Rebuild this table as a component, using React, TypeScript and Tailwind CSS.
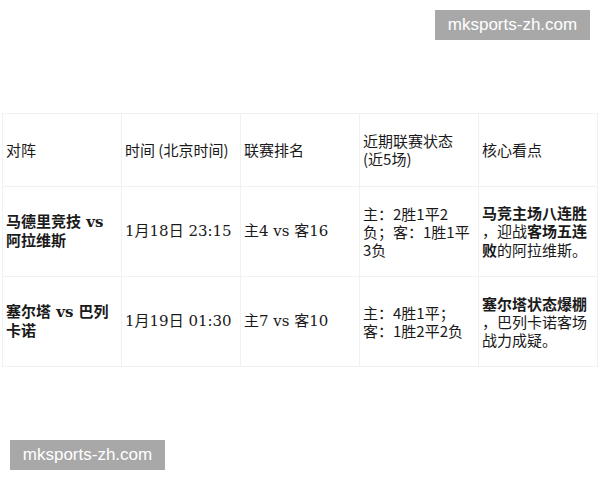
import React from "react";

const serif = "font-['DejaVu_Serif','Noto_Sans_CJK_SC',serif]";
const sans = "font-['Noto_Sans_CJK_SC',sans-serif]";

function Cell({ children, className = "" }: { children: React.ReactNode; className?: string }) {
  return (
    <div className={`flex items-center border-r border-b border-[#f1f1f1] pl-[3px] pr-[3px] text-[15px] text-[#1a1a1a] ${className}`}>
      <div>{children}</div>
    </div>
  );
}

export default function App() {
  return (
    <div className="relative w-[600px] h-[480px] bg-white overflow-hidden">
      <div className="absolute right-[10px] top-[10px] w-[155px] h-[30px] bg-[#a8a8a8] flex items-center justify-center text-white text-[17px] font-['Liberation_Sans',sans-serif]">
        mksports-zh.com
      </div>

      <div className="pt-[113px] pl-[2px]">
        <div className="grid grid-cols-[119px_119px_119px_119px_119px] border-t border-l border-[#f1f1f1] w-[596px]">
          <Cell className={`h-[73px] ${sans}`}>对阵</Cell>
          <Cell className={`h-[73px] ${sans}`}>时间 (北京时间)</Cell>
          <Cell className={`h-[73px] ${sans}`}>联赛排名</Cell>
          <Cell className={`h-[73px] ${sans} leading-[18px]`}>近期联赛状态<br />(近5场)</Cell>
          <Cell className={`h-[73px] ${sans}`}>核心看点</Cell>

          <Cell className={`h-[90px] ${serif} font-bold leading-[19px]`}>马德里竞技 vs<br />阿拉维斯</Cell>
          <Cell className={`h-[90px] ${serif}`}>1月18日 23:15</Cell>
          <Cell className={`h-[90px] ${serif}`}>主4 vs 客16</Cell>
          <Cell className={`h-[90px] ${sans} leading-[18px]`}>主：2胜1平2<br />负；客：1胜1平<br />3负</Cell>
          <Cell className={`h-[90px] ${sans} leading-[18.5px]`}>
            <span className="font-bold">马竞主场八连胜</span><br />，迎战<span className="font-bold">客场五连<br />败</span>的阿拉维斯。
          </Cell>

          <Cell className={`h-[90px] ${serif} font-bold leading-[19px]`}>塞尔塔 vs 巴列<br />卡诺</Cell>
          <Cell className={`h-[90px] ${serif}`}>1月19日 01:30</Cell>
          <Cell className={`h-[90px] ${serif}`}>主7 vs 客10</Cell>
          <Cell className={`h-[90px] ${sans} leading-[18px]`}>主：4胜1平；<br />客：1胜2平2负</Cell>
          <Cell className={`h-[90px] ${sans} leading-[18px]`}>
            <span className="font-bold">塞尔塔状态爆棚</span><br />，巴列卡诺客场<br />战力成疑。
          </Cell>
        </div>
      </div>

      <div className="absolute left-[10px] top-[440px] w-[155px] h-[30px] bg-[#a8a8a8] flex items-center justify-center text-white text-[17px] font-['Liberation_Sans',sans-serif]">
        mksports-zh.com
      </div>
    </div>
  );
}
